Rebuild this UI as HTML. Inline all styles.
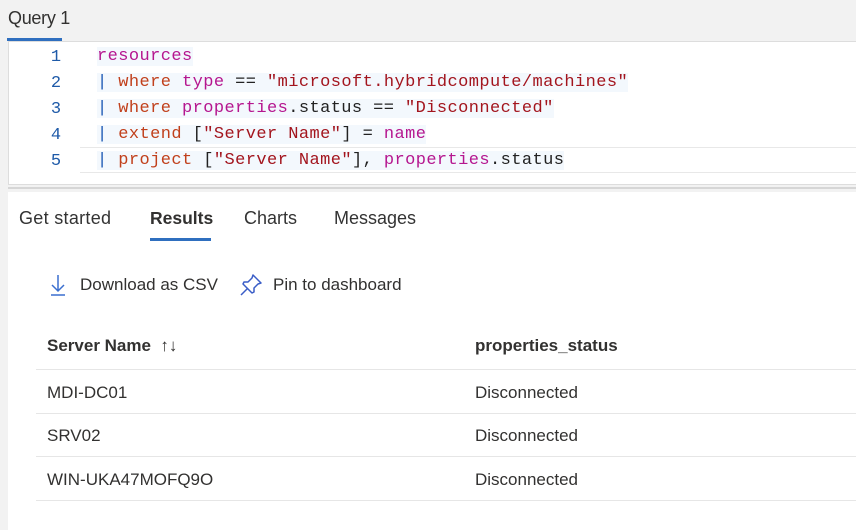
<!DOCTYPE html>
<html><head><style>
body{margin:0;width:856px;height:530px;background:#f2f2f2;position:relative;overflow:hidden;font-family:"Liberation Sans",sans-serif;}
.a{position:absolute}
.code{font-family:"Liberation Mono",monospace;font-size:17px;white-space:pre;letter-spacing:0.42px;line-height:26px;}
.hl{background:#f3f8fd}
.k{color:#c1401c}.p{color:#b5168f}.s{color:#a3151e}.t{color:#222}.bar{color:#1f5bb5}
.ln{color:#1e5aa8;font-family:"Liberation Mono",monospace;font-size:17px;width:20px;text-align:center}
.tab{font-size:18px;color:#333}
.row{left:36px;right:0;height:43px;border-bottom:1px solid #e6e6e6;font-size:17px;color:#323130}
.row span{position:absolute;top:13px}
</style></head><body>
<div class="a" style="left:8px;top:8px;font-size:18px;color:#323130;letter-spacing:-0.3px">Query 1</div>
<div class="a" style="left:7px;top:38px;width:55px;height:3px;background:#2f6fbf"></div>
<div class="a" style="left:8px;top:41px;width:848px;height:142px;background:#fff;border-top:1px solid #ddd;border-bottom:1px solid #ddd;border-left:1px solid #ddd"></div>
<div class="a" style="left:80px;top:147px;width:776px;height:24px;border-top:1px solid #e8e8e8;border-bottom:1px solid #e8e8e8"></div>
<div class="a ln" style="left:46px;top:45px;line-height:26px">1<br>2<br>3<br>4<br>5</div>
<div class="a code" style="left:97px;top:44px"><span class="hl"><span class="p">resources</span></span>
<span class="hl"><span class="bar">|</span> <span class="k">where</span> <span class="p">type</span> <span class="t">==</span> <span class="s">"microsoft.hybridcompute/machines"</span></span>
<span class="hl"><span class="bar">|</span> <span class="k">where</span> <span class="p">properties</span><span class="t">.status ==</span> <span class="s">"Disconnected"</span></span>
<span class="hl"><span class="bar">|</span> <span class="k">extend</span> <span class="t">[</span><span class="s">"Server Name"</span><span class="t">] =</span> <span class="p">name</span></span>
<span class="hl"><span class="bar">|</span> <span class="k">project</span> <span class="t">[</span><span class="s">"Server Name"</span><span class="t">],</span> <span class="p">properties</span><span class="t">.status</span></span></div>
<div class="a" style="left:8px;top:187px;width:848px;height:2px;background:#d6d6d6"></div>
<div class="a" style="left:8px;top:192px;width:848px;height:338px;background:#fff"></div>
<div class="a tab" style="left:19px;top:208px;letter-spacing:0.3px">Get started</div>
<div class="a tab" style="left:150px;top:208px;font-weight:bold;color:#323130;font-size:17.5px">Results</div>
<div class="a" style="left:150px;top:238px;width:61px;height:3px;background:#2f6fbf"></div>
<div class="a tab" style="left:244px;top:208px">Charts</div>
<div class="a tab" style="left:334px;top:208px">Messages</div>
<svg class="a" style="left:48px;top:274px" width="20" height="22" viewBox="0 0 20 22"><path d="M10 1V17M4 11L10 17L16 11M3 21H17" stroke="#3a6fcf" stroke-width="1.5" fill="none"/></svg>
<div class="a" style="left:80px;top:275px;font-size:17px;color:#323130">Download as CSV</div>
<svg class="a" style="left:239px;top:273px" width="24" height="24" viewBox="0 0 24 24"><path d="M14 2L22 10L19 11L15 15L15 19L13 20L4 11L5 9L9 9L13 5Z M8 16L2 22" stroke="#3a5dc7" stroke-width="1.5" fill="none" stroke-linejoin="round"/></svg>
<div class="a" style="left:273px;top:275px;font-size:17px;color:#323130">Pin to dashboard</div>
<div class="a row" style="top:326px;height:43px"><span style="left:11px;top:10px;font-weight:bold">Server Name &nbsp;<span style="position:static;font-weight:normal">↑↓</span></span><span style="left:439px;top:10px;font-weight:bold">properties_status</span></div>
<div class="a row" style="top:370px"><span style="left:11px">MDI-DC01</span><span style="left:439px">Disconnected</span></div>
<div class="a row" style="top:413px"><span style="left:11px">SRV02</span><span style="left:439px">Disconnected</span></div>
<div class="a row" style="top:457px"><span style="left:11px">WIN-UKA47MOFQ9O</span><span style="left:439px">Disconnected</span></div>
</body></html>
